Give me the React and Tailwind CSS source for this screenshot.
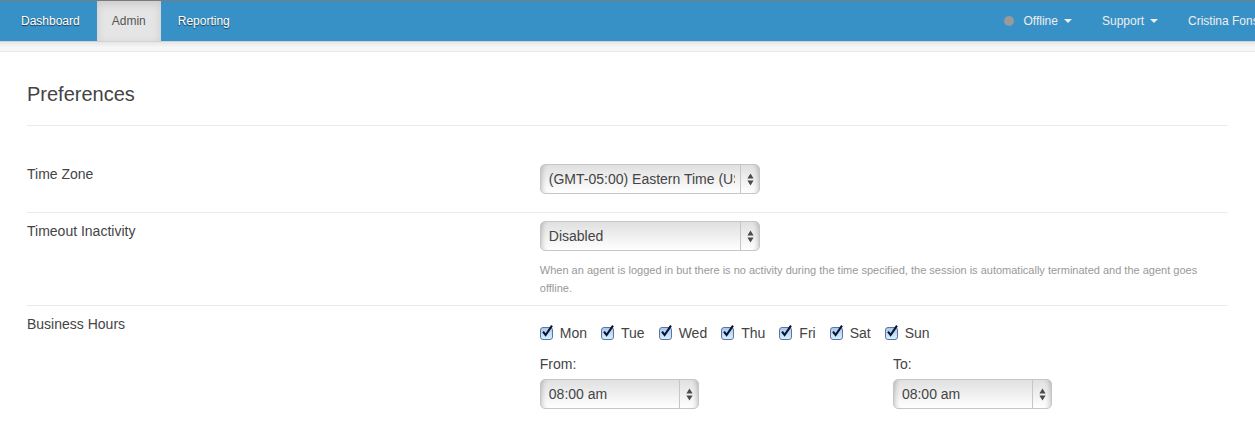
import { useState } from "react";

const DAYS = ["Mon", "Tue", "Wed", "Thu", "Fri", "Sat", "Sun"];

function NavTab({ children, active }) {
  return (
    <a
      href="#"
      aria-current={active ? "page" : undefined}
      className={
        active
          ? "flex items-center bg-[#e5e5e5] px-[15px] text-[#555] shadow-[inset_0_3px_8px_rgba(0,0,0,0.125)]"
          : "flex items-center px-[15px] text-white [text-shadow:0_1px_1px_rgba(0,0,0,0.6)]"
      }
    >
      {children}
    </a>
  );
}

function Caret() {
  return (
    <svg width="8" height="4" viewBox="0 0 8 4" className="shrink-0 fill-[#eee]" aria-hidden="true">
      <path d="M0 0h8L4 4z" />
    </svg>
  );
}

function Select({ id, label, options, className }) {
  return (
    <div className={`relative h-[30px] ${className}`}>
      <select
        id={id}
        aria-label={label}
        className="h-full w-full appearance-none overflow-hidden rounded-[5px] border border-[#c6c6c6] bg-linear-to-b from-[#e0e0e0] to-white pr-6 pl-2 text-sm text-[#444] shadow-[inset_6px_0_5px_-5px_rgba(0,0,0,0.22),inset_-6px_0_5px_-5px_rgba(0,0,0,0.22)]"
      >
        {options.map((o) => (
          <option key={o}>{o}</option>
        ))}
      </select>
      <span className="pointer-events-none absolute inset-y-px right-0 flex w-5 items-center justify-center border-l border-[#c6c6c6]">
        <svg width="7" height="13" viewBox="0 0 7 13" className="fill-[#4a4a4a]" aria-hidden="true">
          <path d="M3.5 0.5L6.6 5.5H0.4zM3.5 12.5L6.6 7.5H0.4z" />
        </svg>
      </span>
    </div>
  );
}

function DayCheckbox({ day }) {
  const [checked, setChecked] = useState(true);
  return (
    <label className="flex items-center gap-[7px]">
      <span className="relative size-[13px]">
        <input
          type="checkbox"
          checked={checked}
          onChange={() => setChecked(!checked)}
          className="block size-[13px] appearance-none rounded-[3px] border border-[#62719f] bg-linear-to-b from-[#a9c9ef] to-[#d4f2ff]"
        />
        {checked && (
          <svg
            width="15"
            height="15"
            viewBox="0 0 15 15"
            className="pointer-events-none absolute -top-0.5 left-0 fill-none stroke-[#0a1530]"
            aria-hidden="true"
          >
            <path d="M3 6.6L5.6 10L12 0.6" strokeWidth="2.1" />
          </svg>
        )}
      </span>
      {day}
    </label>
  );
}

function Row({ title, children, className = "" }) {
  return (
    <section className={`grid grid-cols-[42.7%_1fr] border-[#ebebeb] ${className}`}>
      <h2 className="leading-5">{title}</h2>
      <div>{children}</div>
    </section>
  );
}

export default function App() {
  return (
    <div className="overflow-hidden bg-white font-['Liberation_Sans',Arial,sans-serif] text-sm text-[#444]">
      <header className="flex h-[41px] justify-between border-t border-[#7b7b7b] bg-[#3891c6] text-xs">
        <nav className="flex gap-0.5 pl-1.5">
          <NavTab>Dashboard</NavTab>
          <NavTab active>Admin</NavTab>
          <NavTab>Reporting</NavTab>
        </nav>
        <div className="flex gap-[30px] text-[#eee] [text-shadow:0_1px_1px_rgba(0,0,0,0.6)]">
          <button className="flex items-center gap-1.5">
            <span className="mr-1 size-[10px] rounded-full bg-[#999]" />
            Offline
            <Caret />
          </button>
          <button className="flex items-center gap-1.5">
            Support
            <Caret />
          </button>
          <button className="w-[67px] overflow-hidden text-left whitespace-nowrap">Cristina Fons</button>
        </div>
      </header>
      <div className="h-[11px] border-t border-b border-t-[#d2d2d2] border-b-[#e8e8e8] bg-linear-to-b from-[#e6e6e6] to-[#f7f7f7] to-60%" />
      <main className="px-[27px]">
        <h1 className="border-b border-[#ebebeb] pt-7 pb-[17px] text-xl">Preferences</h1>
        <Row title="Time Zone" className="border-b pt-[38px] pb-[18px]">
          <Select
            id="tz"
            label="Time Zone"
            className="w-[220px]"
            options={["(GMT-05:00) Eastern Time (US & Canada)"]}
          />
        </Row>
        <Row title="Timeout Inactivity" className="border-b pt-2 pb-2">
          <Select id="timeout" label="Timeout Inactivity" className="w-[220px]" options={["Disabled"]} />
          <p className="mt-[10px] text-[11px] leading-[18px] text-[#999]">
            When an agent is logged in but there is no activity during the time specified, the session is
            automatically terminated and the agent goes offline.
          </p>
        </Row>
        <Row title="Business Hours" className="pt-2 pb-4">
          <div className="flex flex-wrap gap-x-[14px] pt-[9px] leading-5">
            {DAYS.map((d) => (
              <DayCheckbox key={d} day={d} />
            ))}
          </div>
          <div className="mt-[11px] grid grid-cols-2 gap-x-[18px] leading-5">
            <div>
              <label htmlFor="from" className="mb-[5px] block">From:</label>
              <Select id="from" label="From" className="w-[159px]" options={["08:00 am"]} />
            </div>
            <div>
              <label htmlFor="to" className="mb-[5px] block">To:</label>
              <Select id="to" label="To" className="w-[159px]" options={["08:00 am"]} />
            </div>
          </div>
        </Row>
      </main>
    </div>
  );
}
